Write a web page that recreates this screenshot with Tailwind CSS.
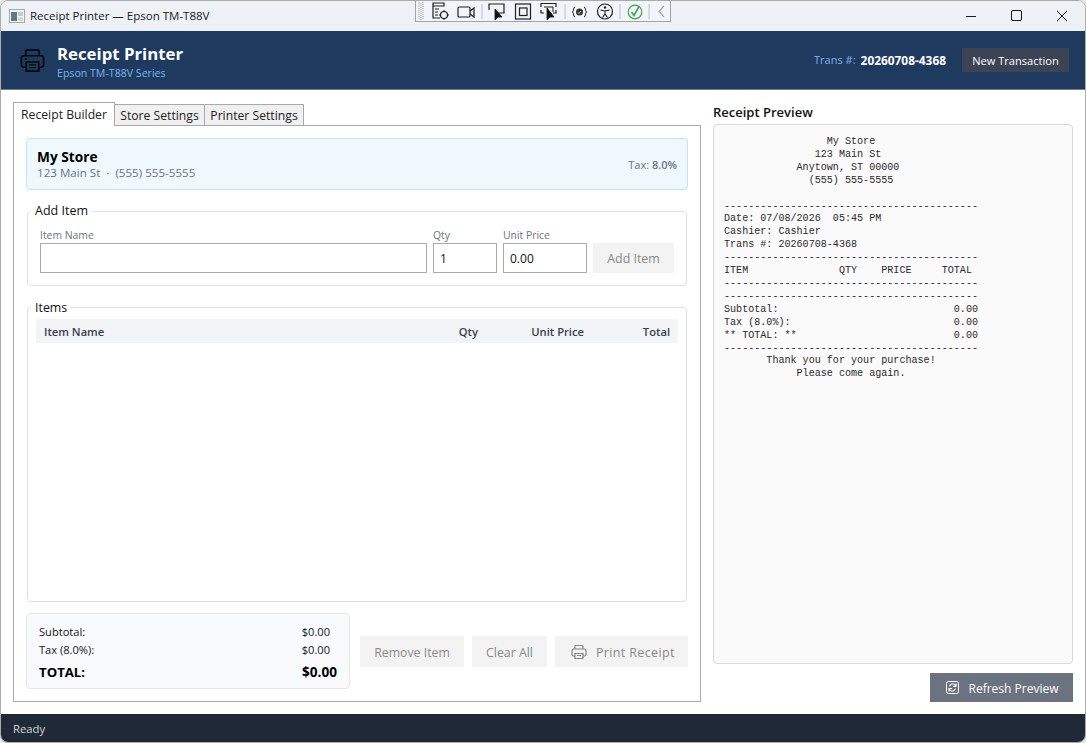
<!DOCTYPE html>
<html>
<head>
<meta charset="utf-8">
<script src="https://cdn.jsdelivr.net/npm/@tailwindcss/browser@4"></script>
</head>
<body class="bg-[#e8e8e8]">
<div class="w-[1086px] h-[743px] flex flex-col overflow-hidden rounded-lg border border-[#ababab] bg-white font-['Open_Sans','Noto_Sans',sans-serif] text-[12px] text-[#111827]">
  <!-- title bar -->
  <div class="relative h-[30px] shrink-0 bg-[#eef2f6] flex items-center">
    <svg class="ml-[8px] w-[16px] h-[14px]" viewBox="0 0 16 14"><rect x=".5" y=".5" width="15" height="13" fill="#f6f6f6" stroke="#a8a8a8"/><rect x="2" y="3" width="6" height="9" fill="#5d7a86"/><rect x="9" y="3" width="5" height="4" fill="#b9ccd4"/><rect x="9" y="8" width="5" height="4" fill="#d8d8d8"/></svg>
    <span class="ml-[5px] text-[#1a1a1a] text-[11.500px]">Receipt Printer — Epson TM-T88V</span>
    <div class="absolute left-[414px] top-[-1px] w-[256px] h-[22px] bg-[#f1f4f8] border border-[#a3a3a3] flex items-center">
      <svg class="w-full h-full" viewBox="0 0 254 20" fill="none" stroke="#1f1f1f" stroke-width="1.2">
        <g stroke="#9a9a9a" stroke-width="1" stroke-dasharray="1 1"><path d="M3 1v18M5 2v17M7 1v18"/></g>
        <path d="M17 2h11v3h-11zM17 5v12h7" /><path d="M19 8h4M19 11h3M19 14h3" stroke-width="1"/><circle cx="28" cy="14" r="3.5"/><path d="M28 9v2M28 17v2M23 14h2M31 14h2" stroke-width="1"/>
        <rect x="42" y="6" width="12" height="10" rx="1"/><path d="M54 10l4-3v9l-4-3"/>
        <path d="M66 3v15" stroke="#c3c8d0"/>
        <path d="M73 9V3h15v9h-6"/><path d="M79 8l0 11 3-3 4 0z" fill="#111" stroke="#111" stroke-width=".8"/>
        <rect x="99.500" y="3" width="15" height="15"/><rect x="103.500" y="7" width="7.500" height="7.500"/>
        <path d="M125 6V2.500h15V6M125 9v3h3M140 9v3h-3" /><path d="M128 6h9v5" stroke-width="1"/><path d="M131 7l0 12 3-3 4 0z" fill="#111" stroke="#111" stroke-width=".8"/>
        <path d="M149 3v15" stroke="#c3c8d0"/>
        <path d="M159 6c-2 0-1 4-2.500 5 1.500 1 .5 5 2.500 5M168 6c2 0 1 4 2.500 5-1.500 1-.5 5-2.500 5" stroke-width="1"/><circle cx="163.500" cy="11" r="3.500" fill="#333" stroke="none"/><path d="M162 11.500l1 1 2-2.500" stroke="#fff" stroke-width=".8"/>
        <circle cx="189" cy="10.500" r="7.500"/><circle cx="189" cy="6.500" r="1.200" fill="#1f1f1f" stroke="none"/><path d="M184.500 9l4.500 1 4.500-1M189 10v3l-2.500 3.500M189 13l2.500 3.500" stroke-width="1.100"/>
        <path d="M204 3v15" stroke="#c3c8d0"/>
        <circle cx="219" cy="11" r="6.800" stroke="#3ba54a" stroke-width="1.200"/><path d="M215.500 11l2.500 3.500 5-9" stroke="#3ba54a" stroke-width="1.600"/>
        <path d="M233 3v15" stroke="#c3c8d0"/>
        <path d="M248 5l-5 5.500 5 5.500" stroke="#a8a8a8" stroke-width="1.200"/>
      </svg>
    </div>
    <div class="ml-auto flex items-center">
      <svg class="w-[46px] h-[30px]" viewBox="0 0 46 30"><path d="M17 15.500h10" stroke="#1a1a1a"/></svg>
      <svg class="w-[46px] h-[30px]" viewBox="0 0 46 30"><rect x="16.500" y="9.500" width="10" height="10" rx="1.500" fill="none" stroke="#1a1a1a"/></svg>
      <svg class="w-[44px] h-[30px]" viewBox="0 0 44 30"><path d="M16 10l10 10M26 10L16 20" stroke="#1a1a1a" fill="none"/></svg>
    </div>
  </div>
  <!-- header -->
  <div class="h-[59px] shrink-0 bg-[#1e3a5f] border-b border-[#6f7f93] flex items-center pl-[18px] pr-[16px]">
    <svg class="ml-[1px] w-[25px] h-[25px]" viewBox="0 0 26 26" fill="none" stroke="#05070b" stroke-width="1.700">
      <path d="M6 8V3.500A1.500 1.500 0 0 1 7.500 2h11A1.500 1.500 0 0 1 20 3.500V8"/>
      <path d="M6 20H4a2.500 2.500 0 0 1-2.500-2.500v-7A2.500 2.500 0 0 1 4 8h18a2.500 2.500 0 0 1 2.500 2.500v7A2.500 2.500 0 0 1 22 20h-2"/>
      <path d="M6.500 14.500h13V24h-13z"/><path d="M9.500 17.500h7M9.500 20.500h7" stroke-width="1.200"/><path d="M5 11.500h2" />
    </svg>
    <div class="ml-[12px] pt-[3px] flex flex-col">
      <div class="text-[16.800px] leading-[22px] font-bold text-white">Receipt Printer</div>
      <div class="text-[10.600px] leading-[14px] text-[#7fb2ee] mt-[1px]">Epson TM-T88V Series</div>
    </div>
    <div class="ml-auto flex items-center">
      <span class="text-[#7fb2ee] text-[11px] pt-[1px]">Trans #:</span>
      <span class="ml-[5px] text-white font-bold text-[11.900px] pt-[1px]">20260708-4368</span>
      <div class="ml-[16px] w-[107px] h-[24px] pt-[2px] flex items-center justify-center bg-[#3b4354] text-white text-[11.100px]">New Transaction</div>
    </div>
  </div>
  <!-- main -->
  <div class="flex-1 min-h-0 flex px-[12px] pt-[12px] pb-[12px] gap-[12px]">
    <div class="w-[688px] flex flex-col">
      <div class="flex items-end h-[24px] relative z-10 text-[12.200px] text-[#222]">
        <div class="w-[102px] h-[24px] pt-[2px] border border-[#a9a9a9] border-b-0 bg-white flex items-center justify-center">Receipt Builder</div>
        <div class="w-[90px] h-[22px] pt-[2px] border border-[#a9a9a9] border-l-0 bg-[#f0f0f0] flex items-center justify-center">Store Settings</div>
        <div class="w-[99px] h-[22px] pt-[2px] border border-[#a9a9a9] border-l-0 bg-[#f0f0f0] flex items-center justify-center">Printer Settings</div>
      </div>
      <div class="flex-1 min-h-0 -mt-px border border-[#a9a9a9] flex flex-col px-[12px] pt-[12px] pb-[12px]">
        <div class="h-[52px] shrink-0 rounded-[4px] border border-[#bae6fd] bg-[#eff8ff] flex items-center justify-between pl-[10px] pr-[10px]">
          <div class="pt-[1px]">
            <div class="text-[13.700px] leading-[17px] font-bold text-black">My Store</div>
            <div class="text-[11.600px] leading-[16px] text-[#6b7280]">123 Main St &nbsp;·&nbsp; (555) 555-5555</div>
          </div>
          <div class="pt-[2px] text-[11px] text-[#6b7280]">Tax: <span class="font-semibold">8.0%</span></div>
        </div>
        <fieldset class="mt-[12px] mx-px shrink-0 rounded-[4px] border border-[#dce1e8] pl-[12px] pr-[12px] pt-[8px] pb-[12px]">
          <legend class="ml-[-9px] px-[4px] text-[12.500px] leading-[18px] text-[#111]">Add Item</legend>
          <div class="flex items-end gap-[6px]">
            <label class="flex flex-col flex-1 text-[10.400px] leading-[14px] text-[#6b7280]">Item Name<span class="block mt-[1px] h-[30px] border border-[#a9a9a9] bg-white"></span></label>
            <label class="flex flex-col w-[64px] text-[10.400px] leading-[14px] text-[#6b7280]">Qty<span class="mt-[1px] h-[30px] border border-[#a9a9a9] bg-white pl-[6px] pt-[2px] flex items-center text-[12px] text-[#111]">1</span></label>
            <label class="flex flex-col w-[84px] text-[10.400px] leading-[14px] text-[#6b7280]">Unit Price<span class="mt-[1px] h-[30px] border border-[#a9a9a9] bg-white pl-[6px] pt-[2px] flex items-center text-[12px] text-[#111]">0.00</span></label>
            <div class="w-[81px] h-[30px] pt-[2px] bg-[#f3f3f3] text-[#8a8a8a] text-[12.400px] flex items-center justify-center">Add Item</div>
          </div>
        </fieldset>
        <fieldset class="mt-[12px] mx-px flex-1 min-h-0 rounded-[4px] border border-[#dce1e8] px-[8px] pt-[3px]">
          <legend class="relative top-[1px] ml-[-5px] px-[4px] text-[12.400px] leading-[18px] text-[#111]">Items</legend>
          <div class="grid grid-cols-[1fr_106px_106px_86px] h-[24px] pt-[2px] items-center bg-[#f3f4f6] text-[#374151] font-semibold text-[11.200px]">
            <div class="pl-[8px]">Item Name</div>
            <div class="text-right pr-[8px]">Qty</div>
            <div class="text-right pr-[8px]">Unit Price</div>
            <div class="text-right pr-[8px]">Total</div>
          </div>
        </fieldset>
        <div class="mt-[11px] h-[76px] shrink-0 flex items-end">
          <div class="w-[324px] h-[76px] rounded-[4px] border border-[#e5e7eb] bg-[#f9fafb] pl-[12px] pr-[12px] pt-[9px] flex flex-col">
            <div class="flex justify-between pr-[7px] text-[11.100px] leading-[17px] text-[#111827]"><span>Subtotal:</span><span>$0.00</span></div>
            <div class="mt-[1px] flex justify-between pr-[7px] text-[11.100px] leading-[18px] text-[#111827]"><span>Tax (8.0%):</span><span>$0.00</span></div>
            <div class="mt-[4px] flex justify-between text-[13.200px] leading-[18px] font-bold text-black"><span>TOTAL:</span><span class="text-[13.600px]">$0.00</span></div>
          </div>
          <div class="ml-[10px] mb-[22px] flex gap-[8px] text-[#8a8a8a] text-[12.300px]">
            <div class="w-[104px] h-[31px] pt-[3px] bg-[#f3f3f3] flex items-center justify-center">Remove Item</div>
            <div class="w-[75px] h-[31px] pt-[3px] bg-[#f3f3f3] flex items-center justify-center">Clear All</div>
            <div class="w-[133px] h-[31px] pl-[16px] bg-[#f3f3f3] flex items-center gap-[9px]">
              <svg class="w-[16px] h-[16px]" viewBox="0 0 16 16" fill="none" stroke="#858585" stroke-width="1.200"><path d="M4 5V2.500A1 1 0 0 1 5 1.500h6a1 1 0 0 1 1 1V5"/><path d="M4 12H2.500a1.500 1.500 0 0 1-1.500-1.500v-4A1.500 1.500 0 0 1 2.500 5h11A1.500 1.500 0 0 1 15 6.500v4a1.500 1.500 0 0 1-1.500 1.500H12"/><path d="M4 9.500h8v5H4z"/><path d="M6 11.500h4" stroke-width="1"/></svg>
              <span class="pt-[3px] text-[12.500px] tracking-[0.35px]">Print Receipt</span>
            </div>
          </div>
        </div>
      </div>
    </div>
    <div class="w-[360px] flex flex-col">
      <div class="h-[22px] pt-[2px] shrink-0 -mt-[1px] flex items-center text-[13px] font-semibold text-[#111]">Receipt Preview</div>
      <pre class="flex-1 min-h-0 mt-[1px] rounded-[4px] border border-[#d6d9df] bg-[#fafafa] pl-[10px] pt-[11px] font-['Liberation_Mono',monospace] text-[10.080px] leading-[12.900px] text-[#2a2a2a]">                 My Store
               123 Main St
            Anytown, ST 00000
              (555) 555-5555

------------------------------------------
Date: 07/08/2026  05:45 PM
Cashier: Cashier
Trans #: 20260708-4368
------------------------------------------
ITEM               QTY    PRICE     TOTAL
------------------------------------------
------------------------------------------
Subtotal:                             0.00
Tax (8.0%):                           0.00
** TOTAL: **                          0.00
------------------------------------------
       Thank you for your purchase!
            Please come again.</pre>
      <div class="mt-[9px] h-[29px] shrink-0 flex justify-end">
        <div class="w-[143px] h-[29px] bg-[#6b7280] text-white flex items-center justify-center gap-[9px]">
          <svg class="w-[15px] h-[15px]" viewBox="0 0 15 15" fill="none" stroke="#fff"><rect x="1.500" y="1.500" width="12" height="12" rx="2"/><path d="M4.500 6.500a3.200 3.200 0 0 1 5.500-1.500l1 1M11 3.500V6.500H8M10.500 8.500A3.200 3.200 0 0 1 5 10l-1-1M4 11.500V8.500h3" stroke-width="1.100"/></svg>
          <span class="pt-[2px]">Refresh Preview</span>
        </div>
      </div>
    </div>
  </div>
  <!-- status -->
  <div class="h-[28px] pt-[2px] shrink-0 bg-[#1f2937] text-[#d1d5db] text-[11.300px] flex items-center pl-[12px]">Ready</div>
</div>
</body>
</html>
